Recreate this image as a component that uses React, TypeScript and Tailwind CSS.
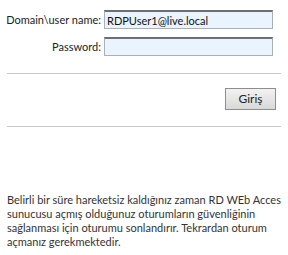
const FIELDS = [
  { label: 'Domain\\user name:', value: 'RDPUser1@live.local' },
  { label: 'Password:', value: '' },
];

const NOTE = [
  'Belirli bir süre hareketsiz kaldığınız zaman RD WEb Acces',
  'sunucusu açmış olduğunuz oturumların güvenliğinin',
  'sağlanması için oturumu sonlandırır. Tekrardan oturum',
  'açmanız gerekmektedir.',
];

export default function App() {
  return (
    <div className="w-[288px] h-[255px] bg-white text-[#333] text-[11px] overflow-hidden" style={{ fontFamily: 'Lato, "Open Sans", sans-serif' }}>
      <div className="pt-[10px] flex flex-col gap-[8px]">
        {FIELDS.map(({ label, value }) => (
          <div key={label} className="flex items-center">
            <span className="w-[104px] shrink-0 text-right pr-[3px] text-[#222] leading-none whitespace-nowrap">{label}</span>
            <div className="w-[169px] h-[19px] bg-[#eaf4fe] border border-[#a9b0b8] border-t-2 border-t-[#6d6f73] flex items-center px-[2px] text-[11px] text-[#111] leading-none">
              {value}
            </div>
          </div>
        ))}
      </div>
      <div className="mx-[7px] mt-[17px] border-t border-[#c8c8c8]" />
      <div className="flex justify-end pr-[12px] mt-[14px]">
        <button className="w-[51px] h-[22px] border border-[#8e8e8e] bg-gradient-to-b from-[#f2f2f2] to-[#d9d9d9] text-[12px] text-[#222] leading-none">
          Giriş
        </button>
      </div>
      <div className="mx-[7px] mt-[16px] border-t border-[#c8c8c8]" />
      <p className="ml-[7px] mt-[66px] leading-[14px] text-[#333] whitespace-nowrap">
        {NOTE.map((line) => (
          <span key={line} className="block">{line}</span>
        ))}
      </p>
    </div>
  );
}
